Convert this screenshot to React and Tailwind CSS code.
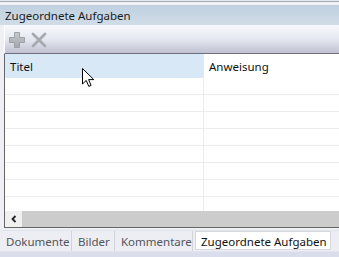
import React from "react";

const font = { fontFamily: '"Noto Sans", "Open Sans", sans-serif' };

function PlusIcon() {
  return (
    <svg width="16" height="16" viewBox="0 0 16 16">
      <defs>
        <linearGradient id="pg" x1="0" y1="0" x2="0" y2="1">
          <stop offset="0" stopColor="#c6cace" />
          <stop offset="1" stopColor="#a2a7ac" />
        </linearGradient>
      </defs>
      <path d="M5.5 0.5h5v5h5v5h-5v5h-5v-5h-5v-5h5z" fill="url(#pg)" stroke="#9ca1a7" strokeWidth="1" />
    </svg>
  );
}

function CrossIcon() {
  return (
    <svg width="16" height="16" viewBox="0 0 16 16">
      <path d="M2 2l12 12M14 2L2 14" stroke="#a6aaaf" strokeWidth="2.8" strokeLinecap="round" />
    </svg>
  );
}

function Cursor() {
  return (
    <svg className="absolute left-[82px] top-[68px]" width="13" height="20" viewBox="0 0 13 20">
      <path d="M0.5 0.5v15.5l3.7-3.6 2.6 6 2.3-1-2.5-5.8h5.2z" fill="#fff" stroke="#000" strokeWidth="1" strokeLinejoin="round" />
    </svg>
  );
}

export default function App() {
  const rows = Array.from({ length: 8 });
  const tabs = [
    { label: "Dokumente", w: "w-[72px]" },
    { label: "Bilder", w: "w-[43px]" },
    { label: "Kommentare", w: "w-[78px]" },
  ];

  return (
    <div className="relative w-[339px] h-[257px] overflow-hidden bg-[#eef0f6] text-[11.5px] flex flex-col" style={font}>
      <div className="h-[1px] bg-[#e6e8ef]" />
      <div className="h-[1px] bg-[#a4a7b4]" />
      <div className="h-[3px] bg-[#f1f2f8]" />

      <div className="h-[20px] bg-gradient-to-b from-[#c0d0df] to-[#d0dde9] px-[5px] leading-[21px] text-[#1a1a1a] whitespace-nowrap">
        Zugeordnete Aufgaben
      </div>

      <div className="ml-[4px] h-[29px] border-l border-white border-b border-b-[#6f707a] bg-gradient-to-b from-[#f7f9fd] via-[#e6e8f1] to-[#c0c1d1] flex items-center gap-[6px] pl-[4px] pt-[2px]">
        <PlusIcon />
        <CrossIcon />
      </div>

      <div className="ml-[4px] h-[174px] border-l border-b border-[#666] bg-white flex flex-col">
        <div className="h-[24px] flex shrink-0 text-[#111]">
          <div className="w-[199px] bg-[#d8e8f6] border-r border-[#e8e8e8] px-[5px] leading-[25px]">Titel</div>
          <div className="flex-1 px-[5px] leading-[25px]">Anweisung</div>
        </div>
        <div className="flex-1 overflow-hidden">
          {rows.map((_, i) => (
            <div key={i} className="h-[17px] flex border-b border-[#ececec]">
              <div className="w-[199px] border-r border-[#ececec]" />
              <div className="flex-1" />
            </div>
          ))}
        </div>
        <div className="h-[16px] flex shrink-0 bg-[#cccccc]">
          <div className="w-[17px] bg-[#f0f0f0] flex items-center justify-center">
            <svg width="8" height="8" viewBox="0 0 8 8">
              <path d="M5.5 1L2.5 4l3 3" stroke="#222" strokeWidth="1.8" fill="none" />
            </svg>
          </div>
        </div>
      </div>

      <div className="h-[2px]" />
      <div className="h-[22px] flex items-stretch bg-[#eceef3] border-y border-[#e2e4ec] whitespace-nowrap">
        {tabs.map((t) => (
          <div key={t.label} className={`${t.w} pl-[6px] leading-[21px] text-[#54545c] border-r border-[#d2d4da]`}>
            {t.label}
          </div>
        ))}
        <div className="ml-[2px] w-[136px] bg-white border border-[#d8d8dc] leading-[19px] text-[#111] px-[5px] mb-[1px]">
          Zugeordnete Aufgaben
        </div>
      </div>
      <div className="flex-1 bg-[#dadeec]" />

      <Cursor />
    </div>
  );
}
